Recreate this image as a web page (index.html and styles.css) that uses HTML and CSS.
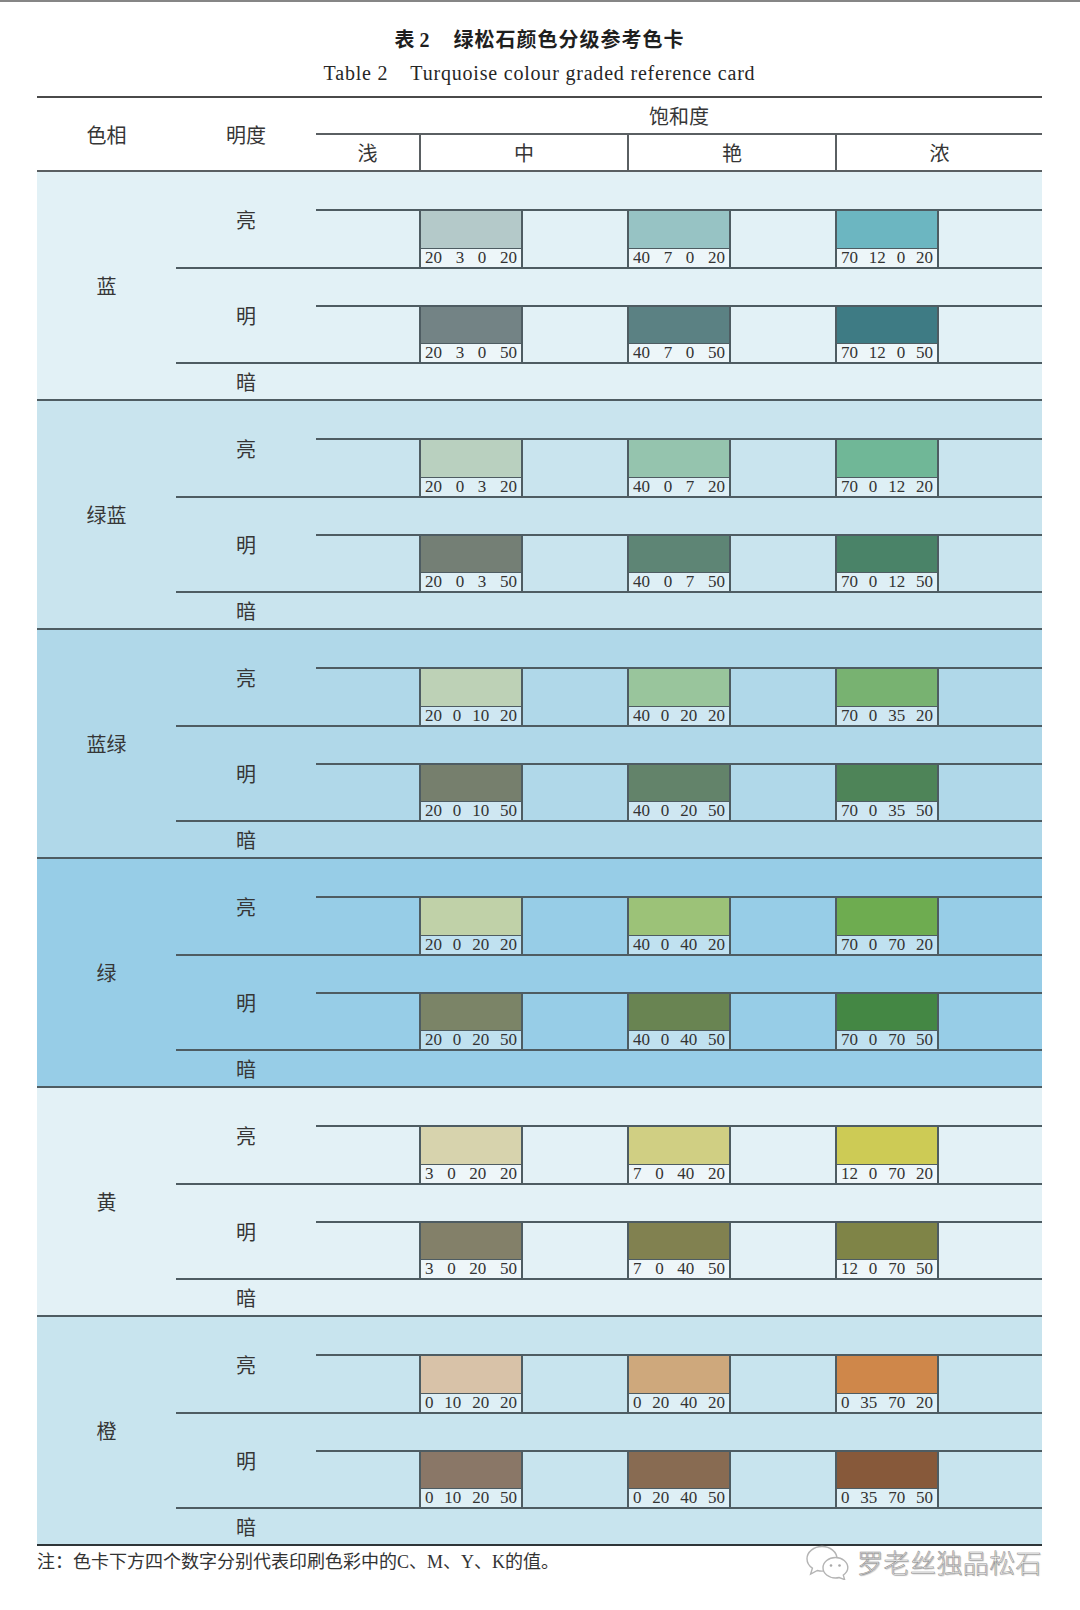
FILE: index.html
```html
<!DOCTYPE html>
<html lang="zh-CN">
<head>
<meta charset="utf-8">
<title>表2 绿松石颜色分级参考色卡</title>
<link rel="stylesheet" href="styles.css">
</head>
<body>
<div class="page">
  <h1 class="title"><span class="tno">表 2</span>绿松石颜色分级参考色卡</h1>
  <p class="subtitle"><span class="tno-en">Table 2</span>Turquoise colour graded reference card</p>

  <div class="table">
    <div class="thead">
      <div class="th th-hue">色相</div>
      <div class="th th-level">明度</div>
      <div class="th-sat">
        <div class="th-sat-title">饱和度</div>
        <div class="th-sat-cols">
          <div class="th-col">浅</div>
          <div class="th-col sep">中</div>
          <div class="th-col sep">艳</div>
          <div class="th-col sep">浓</div>
        </div>
      </div>
    </div>

    <!-- 蓝 -->
    <section class="group g1">
      <div class="hue">蓝</div>
      <div class="levels">
        <div class="level lv-light">
          <div class="lname">亮</div>
          <div class="lsat"><div class="chips">
            <div class="cell"></div>
            <div class="cell"><div class="chip"><div class="swatch" style="background:#b4c9c9"></div><div class="cmyk"><span>20</span><span>3</span><span>0</span><span>20</span></div></div></div>
            <div class="cell"><div class="chip"><div class="swatch" style="background:#97c3c4"></div><div class="cmyk"><span>40</span><span>7</span><span>0</span><span>20</span></div></div></div>
            <div class="cell"><div class="chip"><div class="swatch" style="background:#6cb6c1"></div><div class="cmyk"><span>70</span><span>12</span><span>0</span><span>20</span></div></div></div>
          </div></div>
        </div>
        <div class="level lv-mid">
          <div class="lname">明</div>
          <div class="lsat"><div class="chips">
            <div class="cell"></div>
            <div class="cell"><div class="chip"><div class="swatch" style="background:#738385"></div><div class="cmyk"><span>20</span><span>3</span><span>0</span><span>50</span></div></div></div>
            <div class="cell"><div class="chip"><div class="swatch" style="background:#5b8183"></div><div class="cmyk"><span>40</span><span>7</span><span>0</span><span>50</span></div></div></div>
            <div class="cell"><div class="chip"><div class="swatch" style="background:#3e7b84"></div><div class="cmyk"><span>70</span><span>12</span><span>0</span><span>50</span></div></div></div>
          </div></div>
        </div>
        <div class="level lv-dark"><div class="lname">暗</div></div>
      </div>
    </section>

    <!-- 绿蓝 -->
    <section class="group g2">
      <div class="hue">绿蓝</div>
      <div class="levels">
        <div class="level lv-light">
          <div class="lname">亮</div>
          <div class="lsat"><div class="chips">
            <div class="cell"></div>
            <div class="cell"><div class="chip"><div class="swatch" style="background:#b9d0bf"></div><div class="cmyk"><span>20</span><span>0</span><span>3</span><span>20</span></div></div></div>
            <div class="cell"><div class="chip"><div class="swatch" style="background:#95c4ae"></div><div class="cmyk"><span>40</span><span>0</span><span>7</span><span>20</span></div></div></div>
            <div class="cell"><div class="chip"><div class="swatch" style="background:#70b797"></div><div class="cmyk"><span>70</span><span>0</span><span>12</span><span>20</span></div></div></div>
          </div></div>
        </div>
        <div class="level lv-mid">
          <div class="lname">明</div>
          <div class="lsat"><div class="chips">
            <div class="cell"></div>
            <div class="cell"><div class="chip"><div class="swatch" style="background:#747f75"></div><div class="cmyk"><span>20</span><span>0</span><span>3</span><span>50</span></div></div></div>
            <div class="cell"><div class="chip"><div class="swatch" style="background:#5e8575"></div><div class="cmyk"><span>40</span><span>0</span><span>7</span><span>50</span></div></div></div>
            <div class="cell"><div class="chip"><div class="swatch" style="background:#4a8368"></div><div class="cmyk"><span>70</span><span>0</span><span>12</span><span>50</span></div></div></div>
          </div></div>
        </div>
        <div class="level lv-dark"><div class="lname">暗</div></div>
      </div>
    </section>

    <!-- 蓝绿 -->
    <section class="group g3">
      <div class="hue">蓝绿</div>
      <div class="levels">
        <div class="level lv-light">
          <div class="lname">亮</div>
          <div class="lsat"><div class="chips">
            <div class="cell"></div>
            <div class="cell"><div class="chip"><div class="swatch" style="background:#bdd1b6"></div><div class="cmyk"><span>20</span><span>0</span><span>10</span><span>20</span></div></div></div>
            <div class="cell"><div class="chip"><div class="swatch" style="background:#99c59c"></div><div class="cmyk"><span>40</span><span>0</span><span>20</span><span>20</span></div></div></div>
            <div class="cell"><div class="chip"><div class="swatch" style="background:#78b271"></div><div class="cmyk"><span>70</span><span>0</span><span>35</span><span>20</span></div></div></div>
          </div></div>
        </div>
        <div class="level lv-mid">
          <div class="lname">明</div>
          <div class="lsat"><div class="chips">
            <div class="cell"></div>
            <div class="cell"><div class="chip"><div class="swatch" style="background:#767f6d"></div><div class="cmyk"><span>20</span><span>0</span><span>10</span><span>50</span></div></div></div>
            <div class="cell"><div class="chip"><div class="swatch" style="background:#63836a"></div><div class="cmyk"><span>40</span><span>0</span><span>20</span><span>50</span></div></div></div>
            <div class="cell"><div class="chip"><div class="swatch" style="background:#4e8458"></div><div class="cmyk"><span>70</span><span>0</span><span>35</span><span>50</span></div></div></div>
          </div></div>
        </div>
        <div class="level lv-dark"><div class="lname">暗</div></div>
      </div>
    </section>

    <!-- 绿 -->
    <section class="group g4">
      <div class="hue">绿</div>
      <div class="levels">
        <div class="level lv-light">
          <div class="lname">亮</div>
          <div class="lsat"><div class="chips">
            <div class="cell"></div>
            <div class="cell"><div class="chip"><div class="swatch" style="background:#c0d1a8"></div><div class="cmyk"><span>20</span><span>0</span><span>20</span><span>20</span></div></div></div>
            <div class="cell"><div class="chip"><div class="swatch" style="background:#9cc278"></div><div class="cmyk"><span>40</span><span>0</span><span>40</span><span>20</span></div></div></div>
            <div class="cell"><div class="chip"><div class="swatch" style="background:#6eac50"></div><div class="cmyk"><span>70</span><span>0</span><span>70</span><span>20</span></div></div></div>
          </div></div>
        </div>
        <div class="level lv-mid">
          <div class="lname">明</div>
          <div class="lsat"><div class="chips">
            <div class="cell"></div>
            <div class="cell"><div class="chip"><div class="swatch" style="background:#7b8467"></div><div class="cmyk"><span>20</span><span>0</span><span>20</span><span>50</span></div></div></div>
            <div class="cell"><div class="chip"><div class="swatch" style="background:#698452"></div><div class="cmyk"><span>40</span><span>0</span><span>40</span><span>50</span></div></div></div>
            <div class="cell"><div class="chip"><div class="swatch" style="background:#448744"></div><div class="cmyk"><span>70</span><span>0</span><span>70</span><span>50</span></div></div></div>
          </div></div>
        </div>
        <div class="level lv-dark"><div class="lname">暗</div></div>
      </div>
    </section>

    <!-- 黄 -->
    <section class="group g5">
      <div class="hue">黄</div>
      <div class="levels">
        <div class="level lv-light">
          <div class="lname">亮</div>
          <div class="lsat"><div class="chips">
            <div class="cell"></div>
            <div class="cell"><div class="chip"><div class="swatch" style="background:#d7d3ad"></div><div class="cmyk"><span>3</span><span>0</span><span>20</span><span>20</span></div></div></div>
            <div class="cell"><div class="chip"><div class="swatch" style="background:#d0cf83"></div><div class="cmyk"><span>7</span><span>0</span><span>40</span><span>20</span></div></div></div>
            <div class="cell"><div class="chip"><div class="swatch" style="background:#cdcb55"></div><div class="cmyk"><span>12</span><span>0</span><span>70</span><span>20</span></div></div></div>
          </div></div>
        </div>
        <div class="level lv-mid">
          <div class="lname">明</div>
          <div class="lsat"><div class="chips">
            <div class="cell"></div>
            <div class="cell"><div class="chip"><div class="swatch" style="background:#838069"></div><div class="cmyk"><span>3</span><span>0</span><span>20</span><span>50</span></div></div></div>
            <div class="cell"><div class="chip"><div class="swatch" style="background:#818150"></div><div class="cmyk"><span>7</span><span>0</span><span>40</span><span>50</span></div></div></div>
            <div class="cell"><div class="chip"><div class="swatch" style="background:#7f8447"></div><div class="cmyk"><span>12</span><span>0</span><span>70</span><span>50</span></div></div></div>
          </div></div>
        </div>
        <div class="level lv-dark"><div class="lname">暗</div></div>
      </div>
    </section>

    <!-- 橙 -->
    <section class="group g6">
      <div class="hue">橙</div>
      <div class="levels">
        <div class="level lv-light">
          <div class="lname">亮</div>
          <div class="lsat"><div class="chips">
            <div class="cell"></div>
            <div class="cell"><div class="chip"><div class="swatch" style="background:#d8c2a8"></div><div class="cmyk"><span>0</span><span>10</span><span>20</span><span>20</span></div></div></div>
            <div class="cell"><div class="chip"><div class="swatch" style="background:#cea87c"></div><div class="cmyk"><span>0</span><span>20</span><span>40</span><span>20</span></div></div></div>
            <div class="cell"><div class="chip"><div class="swatch" style="background:#cf874a"></div><div class="cmyk"><span>0</span><span>35</span><span>70</span><span>20</span></div></div></div>
          </div></div>
        </div>
        <div class="level lv-mid">
          <div class="lname">明</div>
          <div class="lsat"><div class="chips">
            <div class="cell"></div>
            <div class="cell"><div class="chip"><div class="swatch" style="background:#8a7767"></div><div class="cmyk"><span>0</span><span>10</span><span>20</span><span>50</span></div></div></div>
            <div class="cell"><div class="chip"><div class="swatch" style="background:#886b52"></div><div class="cmyk"><span>0</span><span>20</span><span>40</span><span>50</span></div></div></div>
            <div class="cell"><div class="chip"><div class="swatch" style="background:#87593a"></div><div class="cmyk"><span>0</span><span>35</span><span>70</span><span>50</span></div></div></div>
          </div></div>
        </div>
        <div class="level lv-dark"><div class="lname">暗</div></div>
      </div>
    </section>
  </div>

  <div class="footer">
    <p class="note">注：色卡下方四个数字分别代表印刷色彩中的C、M、Y、K的值。</p>
    <div class="mark">
      <svg class="mark-logo" width="44" height="36" viewBox="0 0 44 36" aria-hidden="true">
        <path d="M17 2.5 C8.7 2.5 2 8 2 14.8 C2 18.6 4.1 22 7.4 24.2 L5.6 30 L12.4 26.5 C13.9 26.9 15.4 27.1 17 27.1 C25.3 27.1 32 21.6 32 14.8 C32 8 25.3 2.5 17 2.5 Z" fill="#ffffff" stroke="#b4b4b4" stroke-width="1.4"/>
        <path d="M30.5 13.5 C23.6 13.5 18 18.1 18 23.8 C18 29.5 23.6 34 30.5 34 C31.8 34 33 33.8 34.2 33.5 L39.6 35.6 L38.3 31.1 C41 29.2 42.8 26.7 42.8 23.8 C42.8 18.1 37.3 13.5 30.5 13.5 Z" fill="#ffffff" stroke="#b4b4b4" stroke-width="1.4"/>
        <circle cx="26" cy="21.5" r="1.3" fill="#a8a8a8"/>
        <circle cx="34.5" cy="21.5" r="1.3" fill="#a8a8a8"/>
      </svg>
      <span class="mark-text">罗老丝独品松石</span>
    </div>
  </div>
</div>
</body>
</html>
```

FILE: styles.css
```css
* {
  box-sizing: border-box;
  margin: 0;
  padding: 0;
}

html,
body {
  background: #ffffff;
}

body {
  width: 1080px;
  height: 1610px;
  overflow: hidden;
  font-family: "Liberation Serif", "Noto Sans CJK SC", serif;
  color: #363636;
}

.page {
  border-top: 2px solid #868686;
  padding: 26px 38px 0 37px;
}

/* ---------- captions ---------- */
.title {
  font-size: 20px;
  line-height: 24px;
  font-weight: 700;
  text-align: center;
  letter-spacing: 1px;
  color: #1f1f1f;
}

.title .tno {
  letter-spacing: 0;
  margin-right: 24px;
}

.subtitle {
  margin-top: 9px;
  font-size: 20px;
  line-height: 24px;
  text-align: center;
  letter-spacing: 0.8px;
  color: #262626;
}

.subtitle .tno-en {
  margin-right: 22px;
}

/* ---------- table ---------- */
.table {
  margin-top: 11px;
  width: 1005px;
  border-top: 2px solid #4a4a4a;
}

.thead {
  display: flex;
  height: 74px;
  border-bottom: 2px solid #5a5f62;
  background: #ffffff;
}

.th {
  display: flex;
  align-items: center;
  justify-content: center;
  font-size: 20px;
}

.th-hue {
  width: 139px;
}

.th-level {
  width: 140px;
}

.th-sat {
  flex: 1;
  display: flex;
  flex-direction: column;
}

.th-sat-title {
  height: 37px;
  border-bottom: 2px solid #5a5f62;
  display: flex;
  align-items: center;
  justify-content: center;
  font-size: 20px;
}

.th-sat-cols {
  flex: 1;
  display: grid;
  grid-template-columns: 103px 208px 208px 207px;
}

.th-col {
  display: flex;
  align-items: center;
  justify-content: center;
  font-size: 20px;
}

.th-col.sep {
  border-left: 2px solid #5a5f62;
}

/* ---------- hue groups ---------- */
.group {
  display: flex;
  border-bottom: 2px solid #4e5c62;
}

.group:last-child {
  border-bottom-color: #2e3538;
}

.g1 { background: #e2f1f6; }
.g2 { background: #c9e4ee; }
.g3 { background: #b0d8e9; }
.g4 { background: #97cde7; }
.g5 { background: #e3f1f6; }
.g6 { background: #c8e4ee; }

.hue {
  width: 139px;
  display: flex;
  align-items: center;
  justify-content: center;
  font-size: 20px;
}

.levels {
  flex: 1;
  display: flex;
  flex-direction: column;
}

.level {
  display: flex;
}

.level + .level {
  border-top: 2px solid #4e5c62;
}

.lname {
  width: 140px;
  display: flex;
  align-items: center;
  justify-content: center;
  font-size: 20px;
}

.lsat {
  flex: 1;
}

.lv-light .lsat {
  padding-top: 37px;
}

.lv-mid .lsat {
  padding-top: 36px;
}

.chips {
  display: grid;
  grid-template-columns: 103px 208px 208px 207px;
  border-top: 2px solid #4e5c62;
}

.lv-light .chips {
  height: 58px;
}

.lv-mid .chips {
  height: 57px;
}

.lv-dark {
  height: 37px;
}

.cell {
  display: flex;
}

.chip {
  width: 104px;
  display: flex;
  flex-direction: column;
  border-left: 2px solid #4e5c62;
  border-right: 2px solid #4e5c62;
}

.swatch {
  flex: 1;
  border-bottom: 1px solid #4e5c62;
}

.cmyk {
  height: 18px;
  display: flex;
  justify-content: space-between;
  padding: 0 4px;
  font-size: 17px;
  line-height: 18px;
  color: #333333;
  background: rgba(255, 255, 255, 0.4);
}

/* ---------- footer ---------- */
.footer {
  width: 1005px;
  display: flex;
  justify-content: space-between;
  align-items: flex-start;
}

.note {
  margin-top: 4px;
  font-size: 18px;
  line-height: 24px;
  color: #333333;
}

.mark {
  margin-top: -2px;
  display: flex;
  align-items: center;
  gap: 8px;
}

.mark-logo {
  display: block;
}

.mark-text {
  font-family: "Noto Sans CJK SC", sans-serif;
  font-weight: 300;
  font-size: 26px;
  line-height: 32px;
  letter-spacing: 0.4px;
  color: #fbfbfb;
  -webkit-text-stroke: 0.6px #8e8e8e;
  text-shadow: 1px 1px 1px rgba(0, 0, 0, 0.25);
}
```
